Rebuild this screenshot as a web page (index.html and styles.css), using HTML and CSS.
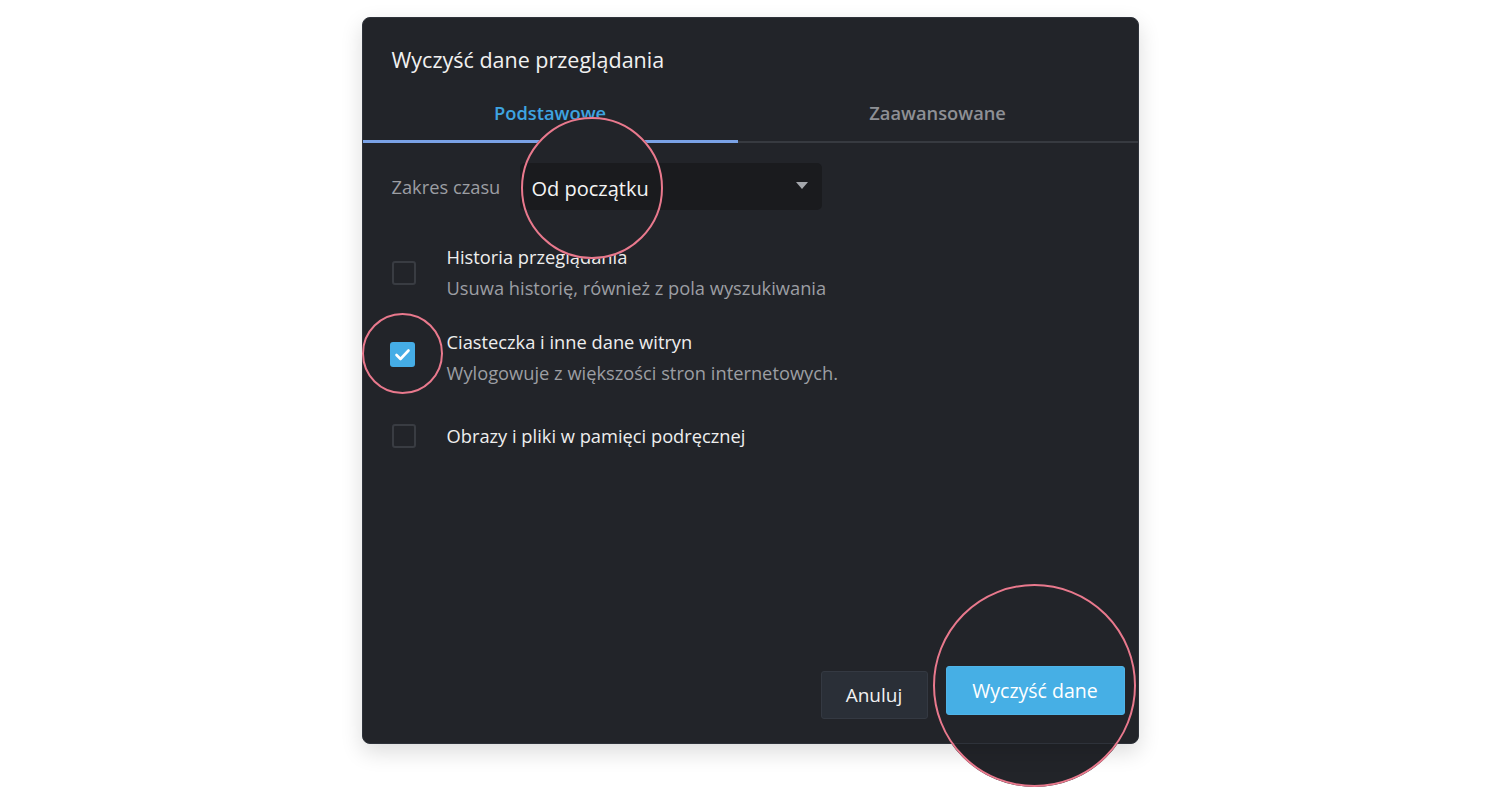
FILE: index.html
```html
<!DOCTYPE html>
<html lang="pl">
<head>
<meta charset="utf-8">
<title>Wyczyść dane przeglądania</title>
<link rel="stylesheet" href="styles.css">
</head>
<body>
<div class="dialog">
  <h1 class="title">Wyczyść dane przeglądania</h1>
  <div class="tabs">
    <div class="tab tab-active">Podstawowe</div>
    <div class="tab">Zaawansowane</div>
  </div>
  <div class="range">
    <span class="range-label">Zakres czasu</span>
    <div class="select">
      <span class="select-value">Od początku</span>
      <span class="select-arrow"></span>
    </div>
  </div>
  <div class="options">
    <div class="option">
      <span class="box"></span>
      <div class="option-text">
        <div class="option-label">Historia przeglądania</div>
        <div class="option-desc">Usuwa historię, również z pola wyszukiwania</div>
      </div>
    </div>
    <div class="option">
      <span class="box box-checked">
        <svg width="25" height="25" viewBox="0 0 25 25"><polyline points="6.5,13 10.5,17 18.5,8.5" fill="none" stroke="#ffffff" stroke-width="2.6" stroke-linecap="round" stroke-linejoin="round"/></svg>
      </span>
      <div class="option-text">
        <div class="option-label">Ciasteczka i inne dane witryn</div>
        <div class="option-desc">Wylogowuje z większości stron internetowych.</div>
      </div>
    </div>
    <div class="option option-single">
      <span class="box"></span>
      <div class="option-text">
        <div class="option-label">Obrazy i pliki w pamięci podręcznej</div>
      </div>
    </div>
  </div>
  <div class="footer">
    <button class="btn btn-cancel">Anuluj</button>
    <button class="btn btn-primary">Wyczyść dane</button>
  </div>
</div>

<div class="spot-fill spot-one"></div>
<div class="spot-fill spot-three"></div>
<div class="ring ring-one"></div>
<div class="ring ring-two"></div>
<div class="ring ring-three"></div>
</body>
</html>
```

FILE: styles.css
```css
* { box-sizing: border-box; }

html {
  margin: 0;
  padding: 0;
  background: #ffffff;
}

body {
  margin: 0;
  padding: 0;
  width: 1500px;
  height: 800px;
  overflow: hidden;
  font-family: "Open Sans", "Noto Sans", sans-serif;
}

.dialog {
  position: relative;
  width: 777px;
  height: 727px;
  margin: 17px auto 0;
  background: #222429;
  border: 1px solid #2e323a;
  border-radius: 8px;
  box-shadow: 0 8px 22px rgba(0, 0, 0, 0.14);
  display: flex;
  flex-direction: column;
  color: #ececec;
}

.title {
  margin: 0;
  padding: 27px 29px 0;
  font-size: 21.5px;
  font-weight: 400;
  line-height: 30px;
  color: #f1f1f1;
}

.tabs {
  display: flex;
  margin-top: 13px;
  border-bottom: 2px solid #373a40;
}

.tab {
  flex: 1 1 auto;
  height: 55px;
  padding-bottom: 3px;
  display: flex;
  align-items: center;
  justify-content: center;
  font-size: 18.3px;
  font-weight: 600;
  color: #8e9095;
  border-bottom: 3px solid transparent;
  margin-bottom: -2px;
}

.tab-active {
  color: #3ea4e1;
  border-bottom-color: #7aa2e6;
}

.range {
  display: flex;
  align-items: center;
  padding: 0 29px;
  margin-top: 20px;
}

.range-label {
  width: 128px;
  font-size: 18.3px;
  color: #9c9ea3;
}

.select {
  position: relative;
  z-index: 2;
  width: 302px;
  height: 47px;
  background: #1a1b1e;
  border-radius: 5px;
  display: flex;
  align-items: center;
  justify-content: space-between;
  padding: 0 14px 0 12px;
}

.select-value {
  font-size: 20px;
  color: #f4f4f4;
  margin-top: 3px;
}

.select-arrow {
  width: 0;
  height: 0;
  border-left: 6px solid transparent;
  border-right: 6px solid transparent;
  border-top: 7px solid #a4a7ac;
  margin-top: -3px;
}

.options {
  display: flex;
  flex-direction: column;
  gap: 28px;
  padding: 0 29px;
  margin-top: 34px;
}

.option {
  display: flex;
  align-items: center;
}

.option-single {
  margin-top: 9px;
}

.box {
  position: relative;
  z-index: 2;
  width: 24px;
  height: 24px;
  flex: 0 0 24px;
  margin-right: 31px;
  border: 2px solid #393c42;
  border-radius: 3px;
  display: flex;
  align-items: center;
  justify-content: center;
}

.box-checked {
  width: 25px;
  height: 25px;
  flex: 0 0 25px;
  margin: -7px 32px 0 -2px;
  border: none;
  background: #45ade6;
  border-radius: 3px;
}

.option-label {
  font-size: 18.3px;
  line-height: 26px;
  color: #eeeeee;
}

.option-desc {
  font-size: 18.3px;
  line-height: 26px;
  margin-top: 5px;
  color: #9c9ea3;
}

.footer {
  margin-top: auto;
  display: flex;
  justify-content: flex-end;
  align-items: flex-start;
  gap: 18px;
  padding: 0 13px 24px 0;
}

.btn {
  font-family: "Open Sans", "Noto Sans", sans-serif;
  border-radius: 3px;
  cursor: pointer;
}

.btn-cancel {
  width: 107px;
  height: 48px;
  margin-top: 5px;
  background: #2a2f37;
  border: 1px solid #343942;
  color: #f1f1f1;
  font-size: 19px;
  position: relative;
  z-index: 2;
}

.btn-primary {
  width: 179px;
  height: 49px;
  background: #46afe5;
  border: 1px solid #4fb4e8;
  color: #ffffff;
  font-size: 19.5px;
  position: relative;
  z-index: 2;
}

.spot-fill {
  position: absolute;
  border-radius: 50%;
  background: #222429;
}

.spot-one {
  left: 521px;
  top: 117px;
  width: 142px;
  height: 142px;
  z-index: 1;
}

.spot-three {
  left: 933px;
  top: 584px;
  width: 203px;
  height: 203px;
  z-index: -1;
}

.ring {
  position: absolute;
  border-radius: 50%;
  border: 2px solid #e9798d;
  z-index: 3;
  pointer-events: none;
}

.ring-one {
  left: 521px;
  top: 117px;
  width: 142px;
  height: 142px;
}

.ring-two {
  left: 362px;
  top: 313px;
  width: 81px;
  height: 81px;
}

.ring-three {
  left: 933px;
  top: 584px;
  width: 203px;
  height: 203px;
}
```
